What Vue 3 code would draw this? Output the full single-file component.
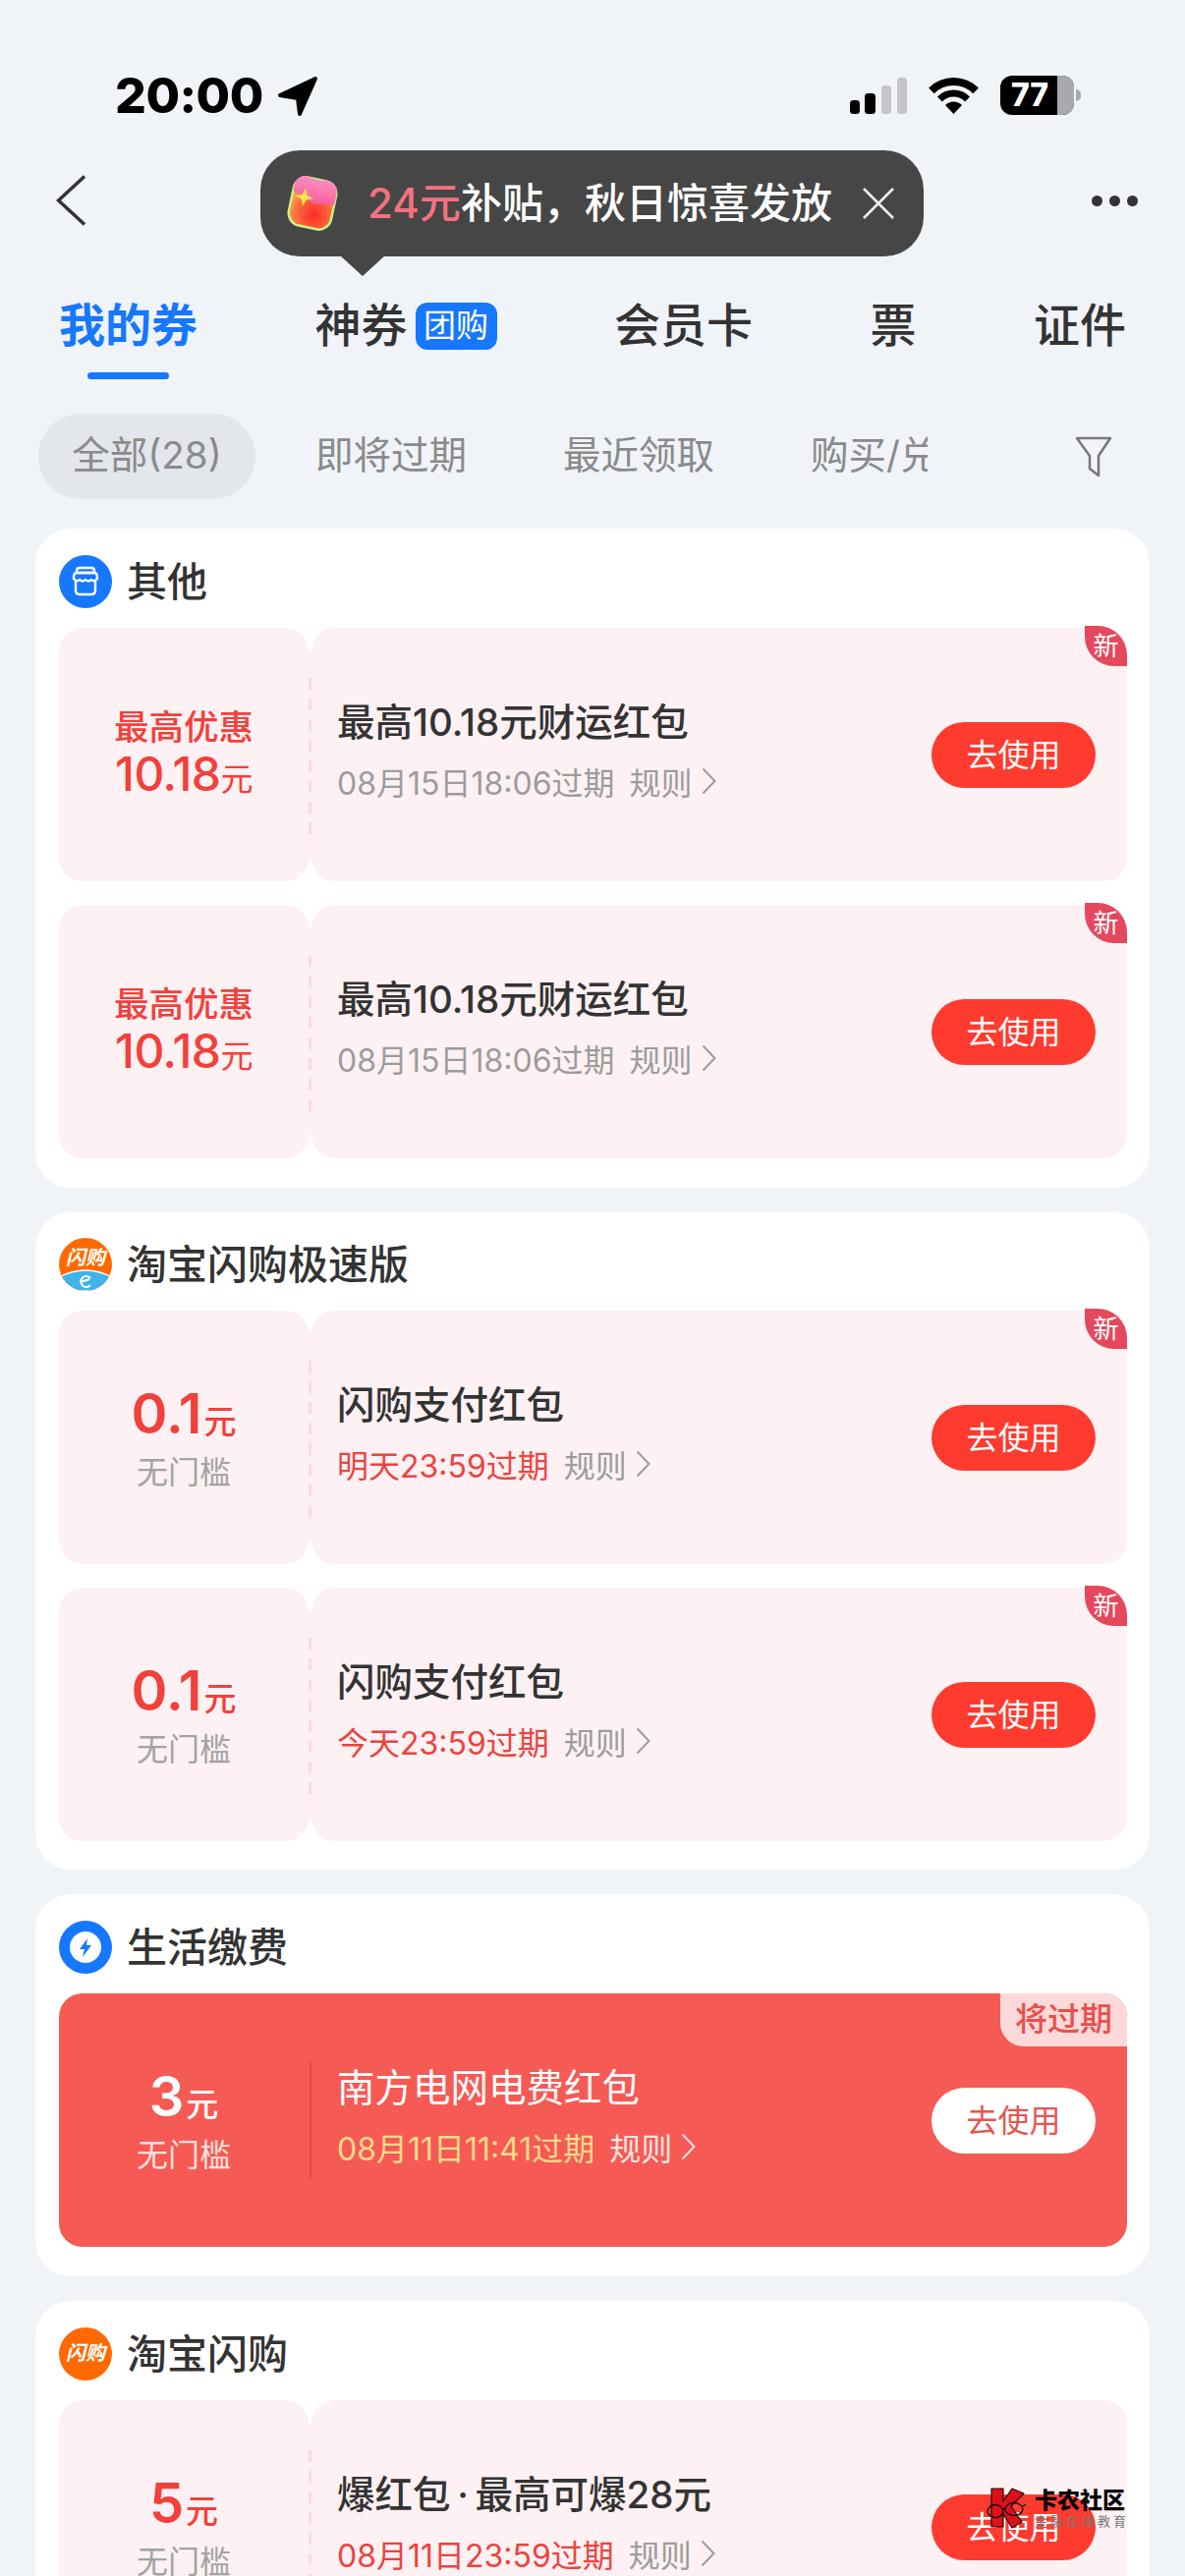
<script setup>
const tabs = [
  { label: '我的券', active: true },
  { label: '神券', badge: '团购' },
  { label: '会员卡' },
  { label: '票' },
  { label: '证件' }
]
const filters = ['即将过期', '最近领取', '购买/兑换']
const cards = [
  {
    name: '其他', icon: 'store',
    coupons: [
      { top: '最高优惠', amount: '10.18', kind: 'max', title: '最高10.18元财运红包', date: '08月15日18:06过期', tag: '新' },
      { top: '最高优惠', amount: '10.18', kind: 'max', title: '最高10.18元财运红包', date: '08月15日18:06过期', tag: '新' }
    ]
  },
  {
    name: '淘宝闪购极速版', icon: 'flashE',
    coupons: [
      { amount: '0.1', title: '闪购支付红包', date: '明天23:59过期', urgent: true, tag: '新' },
      { amount: '0.1', title: '闪购支付红包', date: '今天23:59过期', urgent: true, tag: '新' }
    ]
  },
  {
    name: '生活缴费', icon: 'bolt',
    coupons: [
      { amount: '3', title: '南方电网电费红包', date: '08月11日11:41过期', hot: true, tag: '将过期' }
    ]
  },
  {
    name: '淘宝闪购', icon: 'flash',
    coupons: [
      { amount: '5', title: '爆红包\u2009·\u2009最高可爆28元', date: '08月11日23:59过期', urgent: true }
    ]
  }
]
const tipText = '补贴\uFF0C秋日惊喜发放'
</script>

<template>
  <div class="page">
    <div class="status">
      <div class="clock">
        <span class="time">20:00</span>
        <svg class="loc" width="42" height="42" viewBox="0 0 42 42"><path d="M39 3 L3 20 L21 23 L23 39 Z" fill="#000" stroke="#000" stroke-width="4" stroke-linejoin="round"/></svg>
      </div>
      <div class="sys">
        <svg width="58" height="37" viewBox="0 0 58 37">
          <rect x="0" y="23" width="10" height="14" rx="3.5" fill="#000"/>
          <rect x="15" y="16" width="11" height="21" rx="3.5" fill="#000"/>
          <rect x="32" y="8" width="10" height="29" rx="3.5" fill="#c3c5ca"/>
          <rect x="48" y="0" width="10" height="37" rx="3.5" fill="#c3c5ca"/>
        </svg>
        <svg class="wifi" width="51" height="37" viewBox="0 0 51 37">
          <path d="M2.9 13.4 A32 32 0 0 1 48.1 13.4" fill="none" stroke="#000" stroke-width="8"/>
          <path d="M11.4 21.9 A20 20 0 0 1 39.6 21.9" fill="none" stroke="#000" stroke-width="7"/>
          <path d="M25.5 37 L17 28 A12 12 0 0 1 34 28 Z" fill="#000"/>
        </svg>
        <div class="battery"><span class="level">77</span><i class="rest"></i><i class="nub"></i></div>
      </div>
    </div>

    <div class="nav">
      <svg width="30" height="52" viewBox="0 0 30 52"><path d="M29 1.500 L2.500 26 L29 50.500" fill="none" stroke="#333" stroke-width="3.500"/></svg>
      <div class="dots"><i></i><i></i><i></i></div>
      <div class="tip">
        <svg width="52" height="58" viewBox="0 0 52 58">
          <defs>
            <radialGradient id="pk" cx="0.58" cy="0.72" r="0.6">
              <stop offset="0" stop-color="#fb2a2a"/>
              <stop offset="0.65" stop-color="#fc6a3a"/>
              <stop offset="1" stop-color="#fba04a"/>
            </radialGradient>
            <linearGradient id="fl" x1="0" y1="0" x2="0" y2="1">
              <stop offset="0" stop-color="#fc8fc0"/>
              <stop offset="1" stop-color="#f95c9a"/>
            </linearGradient>
          </defs>
          <g transform="rotate(12 26 29)">
            <rect x="4" y="4" width="44" height="50" rx="13" fill="url(#pk)" stroke="#cdf080" stroke-width="2.500"/>
            <path d="M4 16 Q4 3 16 3 Q26 6 36 3 Q48 3 48 16 V24 Q48 27 44 27 L27 29 L8 22 Q4 21 4 18 Z" fill="url(#fl)"/>
            <path d="M16 15 L19 22 L26 24 L19 27 L17 34 L14 27 L7 25 L14 22 Z" fill="#ffe34d"/>
          </g>
        </svg>
        <span class="tip-text"><em>24元</em>{{ tipText }}</span>
        <svg class="tip-x" width="34" height="34" viewBox="0 0 34 34"><path d="M2 2 L32 32 M32 2 L2 32" stroke="#eee" stroke-width="2.600"/></svg>
      </div>
    </div>

    <div class="tabs">
      <div v-for="t in tabs" :key="t.label" class="tab" :class="{ on: t.active }">
        <span>{{ t.label }}</span>
        <b v-if="t.badge" class="group">{{ t.badge }}</b>
      </div>
    </div>

    <div class="filters">
      <div class="scroller">
        <span class="pill">全部(28)</span>
        <span v-for="f in filters" :key="f" class="chip">{{ f }}</span>
      </div>
      <svg class="funnel" width="38" height="42" viewBox="0 0 38 42"><path d="M2 2 H36 L24 20 V40 L15 33 V20 Z" fill="none" stroke="#777" stroke-width="2.500" stroke-linejoin="round"/></svg>
    </div>

    <div class="list">
      <section v-for="c in cards" :key="c.name" class="card">
        <header class="head">
          <svg v-if="c.icon === 'store'" width="54" height="54" viewBox="0 0 54 54">
            <circle cx="27" cy="27" r="27" fill="#1677ff"/>
            <g fill="none" stroke="#fff" stroke-width="2.400" stroke-linejoin="round">
              <path d="M18 16 Q18 13 21 13 H33 Q36 13 36 16 V18 H18 Z"/>
              <path d="M15 23 Q15 18 18 18 H36 Q39 18 39 23 V24 Q36 28 33 25 Q30 28 27 25 Q24 28 21 25 Q18 28 15 24 Z"/>
              <path d="M17 27 V36 Q17 40 21 40 H33 Q37 40 37 36 V27"/>
            </g>
          </svg>
          <svg v-else-if="c.icon === 'bolt'" width="54" height="54" viewBox="0 0 54 54">
            <circle cx="27" cy="27" r="27" fill="#1677ff"/>
            <circle cx="27" cy="27" r="16" fill="#fff"/>
            <path d="M29 18 L21 29 H26 L24 37 L33 25 H28 Z" fill="#1677ff"/>
          </svg>
          <div v-else-if="c.icon === 'flashE'" class="brand two">
            <span>闪购</span>
            <svg width="54" height="22" viewBox="0 0 54 22"><path d="M0 8 Q27 -6 54 8 V22 H0 Z" fill="#3fb3ea" stroke="#fff" stroke-width="1.500"/><path d="M32 9 A5.500 5.500 0 1 0 32 16 M22 13 L31 10" fill="none" stroke="#fff" stroke-width="2"/></svg>
          </div>
          <div v-else class="brand"><span>闪购</span></div>
          <h2>{{ c.name }}</h2>
        </header>

        <div class="stack">
          <article v-for="(p, i) in c.coupons" :key="i" class="coupon" :class="{ hot: p.hot }">
            <div class="stub" :class="{ max: p.kind === 'max' }">
              <template v-if="p.kind === 'max'">
                <div class="max-top">{{ p.top }}</div>
                <div class="max-num">{{ p.amount }}<small>元</small></div>
              </template>
              <template v-else>
                <div class="num">{{ p.amount }}<small>元</small></div>
                <div class="cond">无门槛</div>
              </template>
            </div>
            <i class="tear"></i>
            <div class="main">
              <div class="info">
                <div class="title">{{ p.title }}</div>
                <div class="meta">
                  <span class="date" :class="{ urgent: p.urgent }">{{ p.date }}</span>
                  <span class="rule">规则</span>
                  <svg width="15" height="28" viewBox="0 0 15 28"><path d="M1.500 1.500 L13.500 14 L1.500 26.500" fill="none" stroke="currentColor" stroke-width="2"/></svg>
                </div>
              </div>
              <button class="use">去使用</button>
            </div>
            <span v-if="p.tag" class="tag" :class="{ soon: p.hot }">{{ p.tag }}</span>
          </article>
        </div>
      </section>
    </div>

    <div class="mark">
      <svg width="42" height="42" viewBox="0 0 42 42">
        <path d="M6 1 H18 V14 L27 1 L39 6 L26 19 L37 35 L27 41 L18 27 V40 H6 Z" fill="#e01018" stroke="#111" stroke-width="1.200" stroke-linejoin="round"/>
        <g fill="none" stroke="#111" stroke-width="1.300">
          <ellipse cx="10" cy="24" rx="8" ry="6.500"/>
          <ellipse cx="29" cy="22" rx="9" ry="6.500"/>
          <path d="M17 22 L21 21 M38 19 L41 17"/>
        </g>
      </svg>
      <div class="mark-text">
        <b>卡农社区</b>
        <span>金融在线教育</span>
      </div>
    </div>
  </div>
</template>

<style scoped>
.page {
  position: relative;
  width: 1206px;
  height: 2622px;
  overflow: hidden;
  background: #f0f3f8;
  font-family: Inter, "Noto Sans CJK SC", sans-serif;
  color: #333;
}
.status {
  height: 54px;
  padding: 70px 113px 40px 117px;
  display: flex;
  justify-content: space-between;
  align-items: center;
}
.clock { display: flex; align-items: center; gap: 14px; }
.time { font: 800 50px/54px Inter, sans-serif; color: #000; letter-spacing: -0.5px; }
.loc { margin-top: 2px; }
.sys { display: flex; align-items: center; gap: 22px; }
.battery {
  position: relative;
  width: 75px;
  height: 40px;
  border-radius: 12px;
  background: #000;
  display: flex;
  overflow: visible;
}
.level {
  width: 58px;
  padding-left: 2px;
  box-sizing: border-box;
  text-align: center;
  font: 800 32px/40px Inter, sans-serif;
  color: #fff;
}
.rest {
  position: absolute;
  right: 0;
  top: 0;
  width: 17px;
  height: 40px;
  background: #a8a9ad;
  border-radius: 0 12px 12px 0;
}
.nub {
  position: absolute;
  right: -7px;
  top: 14px;
  width: 5px;
  height: 12px;
  background: #a8a9ad;
  border-radius: 0 5px 5px 0;
}
.nav {
  position: relative;
  height: 80px;
  padding: 0 48px 0 57px;
  display: flex;
  justify-content: space-between;
  align-items: center;
}
.dots { display: flex; gap: 7px; }
.dots i { width: 11px; height: 11px; border-radius: 50%; background: #333; }
.tip {
  position: absolute;
  left: 265px;
  top: -11px;
  width: 675px;
  height: 108px;
  box-sizing: border-box;
  padding: 0 29px 0 27px;
  background: #464646;
  border-radius: 40px;
  display: flex;
  align-items: center;
  justify-content: space-between;
}
.tip::after {
  content: "";
  position: absolute;
  left: 81px;
  bottom: -20px;
  border-left: 23px solid transparent;
  border-right: 23px solid transparent;
  border-top: 21px solid #464646;
}
.tip-text { font-size: 42px; font-weight: 500; color: #fff; line-height: 56px; white-space: nowrap; }
.tip-text em { font-style: normal; color: #f4717f; }
.tabs {
  margin-top: 58px;
  padding: 0 60px;
  display: flex;
  justify-content: space-between;
}
.tab {
  position: relative;
  display: flex;
  align-items: center;
  gap: 8px;
  height: 84px;
  padding-bottom: 24px;
  box-sizing: border-box;
  font-size: 47px;
  line-height: 60px;
  font-weight: 500;
  color: #333;
}
.tab span { margin-bottom: 2px; }
.tab.on { color: #1677ff; font-weight: 700; }
.tab.on::after {
  content: "";
  position: absolute;
  left: 29px;
  right: 29px;
  bottom: 0;
  height: 7px;
  border-radius: 4px;
  background: #1677ff;
}
.group {
  width: 83px;
  height: 48px;
  border-radius: 12px;
  background: #1677ff;
  color: #fff;
  font-size: 33px;
  font-weight: 400;
  line-height: 46px;
  text-align: center;
}
.filters {
  margin-top: 35px;
  padding-left: 39px;
  display: flex;
  align-items: center;
}
.scroller {
  width: 905px;
  height: 87px;
  overflow: hidden;
  display: flex;
  align-items: center;
  white-space: nowrap;
  font-size: 38.5px;
  line-height: 85px;
  color: #8a8a8a;
}
.pill {
  flex: none;
  height: 87px;
  width: 221px;
  text-align: center;
  margin-right: 12px;
  border-radius: 44px;
  background: #e3e6ea;
}
.chip { flex: none; padding: 0 49px; height: 87px; }
.funnel { margin-left: 150px; }
.list {
  margin: 30px 36px 0;
  display: flex;
  flex-direction: column;
  gap: 25px;
}
.card {
  padding: 27px 23px 30px 24px;
  background: #fff;
  border-radius: 36px;
}
.card:nth-child(2) { padding-top: 26px; padding-bottom: 29px; }
.head {
  height: 54px;
  display: flex;
  align-items: center;
  gap: 15px;
  margin-bottom: 20px;
}
.head h2 { margin: 0 0 1px; font-size: 41px; font-weight: 500; line-height: 54px; color: #333; }
.brand {
  position: relative;
  width: 54px;
  height: 54px;
  border-radius: 50%;
  background: #ff6a00;
  overflow: hidden;
  color: #fff;
  font-size: 20px;
  font-weight: 700;
  line-height: 52px;
  text-align: center;
  font-style: italic;
}
.brand.two { line-height: 40px; }
.brand.two svg { position: absolute; left: 0; bottom: 0; }
.stack { display: flex; flex-direction: column; gap: 24px; }
.coupon {
  position: relative;
  height: 258px;
  display: flex;
}
.stub, .main { background: #fef1f3; border-radius: 24px; }
.stub {
  flex: none;
  width: 254px;
  box-sizing: border-box;
  padding-top: 8px;
  display: flex;
  flex-direction: column;
  align-items: center;
  justify-content: center;
}
.stub.max { padding-top: 0; padding-bottom: 6px; }
.max-top { font-size: 35.5px; line-height: 50px; font-weight: 500; color: #f2403a; margin-top: 3px; margin-bottom: -3px; }
.max-num { font-size: 48px; line-height: 50px; font-weight: 500; color: #f2403a; letter-spacing: -0.5px; }
.max-num small { font-size: 33px; font-weight: 400; }
.num { font-size: 56px; line-height: 56px; font-weight: 600; color: #f2403a; margin-top: 3px; margin-bottom: -3px; }
.num small { font-size: 33px; font-weight: 500; margin-left: 2px; }
.cond { font-size: 32px; line-height: 54px; color: #a3a3a3; }
.tear {
  flex: none;
  width: 3px;
  margin: 24px 0;
  padding: 27px 0 23px;
  box-sizing: border-box;
  background: #fef1f3;
}
.tear::before {
  content: "";
  display: block;
  height: 100%;
  background: repeating-linear-gradient(to bottom, #fbd9e0 0 12px, transparent 12px 21px);
}
.main {
  flex: 1;
  min-width: 0;
  box-sizing: border-box;
  padding: 0 32px 0 26px;
  display: flex;
  align-items: center;
  justify-content: space-between;
}
.info { padding-bottom: 9px; }
.title { font-size: 38.5px; line-height: 50px; font-weight: 500; color: #333; white-space: nowrap; }
.meta {
  margin-top: 13px;
  height: 44px;
  display: flex;
  align-items: center;
  font-size: 32px;
  color: #9c9c9c;
  white-space: nowrap;
}
.date.urgent { color: #ea4440; }
.rule { margin: 0 9px 0 15px; }
.use {
  flex: none;
  width: 167px;
  height: 67px;
  padding: 0 0 5px;
  border: 0;
  border-radius: 34px;
  background: #ff3b30;
  color: #fff;
  font: 400 32px/62px "Noto Sans CJK SC", sans-serif;
}
.tag {
  position: absolute;
  right: 0;
  top: -2px;
  width: 43px;
  height: 41px;
  border-radius: 0 30px 0 30px;
  background: #e5485d;
  color: #fff;
  font-size: 26px;
  line-height: 42px;
  text-align: center;
}
.tag.soon {
  top: 0;
  width: 129px;
  height: 54px;
  border-radius: 0 24px 0 24px;
  background: #ffd9d9;
  color: #e8504c;
  font-size: 33px;
  font-weight: 500;
  line-height: 52px;
}
.coupon.hot { background: #f65a54; border-radius: 24px; }
.hot .stub, .hot .main { background: transparent; }
.hot .tear { width: 2px; margin: 69px 0 69px 1px; padding: 0; background: #e24a44; }
.hot .tear::before { display: none; }
.hot .num, .hot .cond, .hot .title { color: #fff; }
.hot .cond { color: #fde0de; }
.hot .title { font-weight: 400; }
.hot .date { color: #ffd98a; }
.hot .meta { color: #fde4e2; }
.hot .use { background: #fff; color: #e8544f; }
.mark {
  position: absolute;
  left: 1003px;
  top: 2532px;
  display: flex;
  gap: 8px;
}
.mark-text { display: flex; flex-direction: column; }
.mark-text b { font-size: 23px; line-height: 26px; font-weight: 900; color: #000; letter-spacing: 0; }
.mark-text span { font-size: 13px; line-height: 16px; color: #777; letter-spacing: 3px; white-space: nowrap; }
</style>

<style>
html, body { margin: 0; background: #f0f3f8; }
</style>
